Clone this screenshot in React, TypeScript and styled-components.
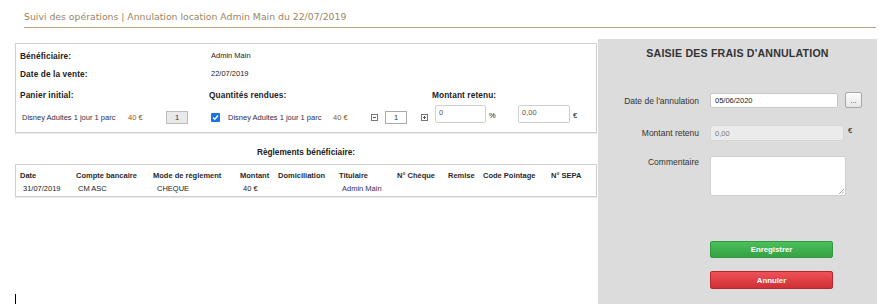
import React from 'react';
import styled, { createGlobalStyle } from 'styled-components';

const GlobalStyle = createGlobalStyle`
  html, body {
    margin: 0;
    padding: 0;
    background: #fff;
  }
  body {
    font-family: "Liberation Sans", Arial, sans-serif;
    color: #222;
  }
`;

const Page = styled.div`
  width: 880px;
  height: 305px;
  overflow: hidden;
`;

const Header = styled.div`
  margin: 0 4px 0 24px;
  padding-top: 12px;
  height: 15px;
  border-bottom: 1px solid #b7a386;
  font-family: "DejaVu Sans", Verdana, sans-serif;
  font-size: 9.3px;
  line-height: 10px;
  color: #9c8562;
`;

const Main = styled.div`
  display: flex;
  gap: 1px;
  margin-top: 11px;
  padding-left: 15px;
`;

const LeftColumn = styled.div`
  width: 582px;
  display: flex;
  flex-direction: column;
`;

const Box = styled.div`
  border: 1px solid #d0d0d0;
  box-shadow: 0 1px 1px rgba(0, 0, 0, 0.08);
`;

const InfoBox = styled(Box)`
  margin-top: 4px;
  height: 90px;
  padding-top: 7px;
  box-sizing: border-box;
`;

const InfoRow = styled.div<{ $mt?: number }>`
  display: grid;
  grid-template-columns: 193px 223px 1fr;
  margin-top: ${(p) => p.$mt ?? 0}px;
`;

const Label = styled.div<{ $indent?: number }>`
  padding-left: ${(p) => p.$indent ?? 4}px;
  font-size: 8.3px;
  font-weight: bold;
  line-height: 10px;
  color: #222;
  letter-spacing: 0.1px;
`;

const Value = styled.div`
  padding-left: 2px;
  font-size: 7.5px;
  line-height: 10px;
  color: #222;
`;

const ItemCell = styled.div<{ $pl?: number }>`
  display: flex;
  align-items: center;
  height: 18px;
  padding-left: ${(p) => p.$pl ?? 0}px;
  font-size: 7.5px;
  color: #333;
`;

const ProductName = styled.span<{ $w: number }>`
  width: ${(p) => p.$w}px;
  color: #2f2d4c;
  white-space: nowrap;
`;

const Price = styled.span`
  width: 38px;
  color: #8a5a2b;
  white-space: nowrap;
`;

const QtyInput = styled.div<{ $disabled?: boolean }>`
  width: 22px;
  height: 13px;
  box-sizing: border-box;
  border: 1px solid ${(p) => (p.$disabled ? '#bcbcbc' : '#a9a9a9')};
  background: ${(p) => (p.$disabled ? '#e9e9e9' : '#fff')};
  display: flex;
  align-items: center;
  justify-content: center;
  font-size: 7.5px;
  color: #333;
`;

const Check = styled.span`
  width: 9px;
  height: 9px;
  margin: 0 8px 0 2px;
  background: #1a73e8;
  border-radius: 1px;
  display: flex;
  align-items: center;
  justify-content: center;
`;

const StepIcon = styled.span<{ $mr: number; $ml?: number }>`
  width: 7px;
  height: 7px;
  margin-left: ${(p) => p.$ml ?? 0}px;
  margin-right: ${(p) => p.$mr}px;
  display: flex;
`;

const AmountRow = styled(ItemCell)`
  margin-top: -3px;
  height: 20px;
  padding-left: 3px;
  align-items: flex-start;
`;

const AmountInput = styled.div<{ $w: number }>`
  width: ${(p) => p.$w}px;
  height: 18px;
  box-sizing: border-box;
  border: 1px solid #cfcfcf;
  border-radius: 2px;
  padding: 2px 0 0 3px;
  font-size: 7.5px;
  color: #555;
`;

const Unit = styled.span<{ $w: number }>`
  width: ${(p) => p.$w}px;
  padding-left: 3px;
  padding-top: 6px;
  font-size: 7.5px;
  color: #222;
`;

const SectionTitle = styled.div`
  margin-top: 14px;
  text-align: center;
  font-size: 8.3px;
  font-weight: bold;
  line-height: 10px;
  color: #222;
`;

const TableBox = styled(Box)`
  margin-top: 7px;
  height: 33px;
  padding-top: 4px;
  box-sizing: border-box;
`;

const Table = styled.table`
  border-collapse: collapse;
  table-layout: fixed;
  width: 100%;
  font-size: 7.5px;
`;

const Th = styled.th<{ $w?: number }>`
  width: ${(p) => (p.$w ? `${p.$w - 4}px` : 'auto')};
  text-align: left;
  font-weight: bold;
  padding: 0 0 0 4px;
  height: 13px;
  color: #2a2a2a;
  white-space: nowrap;
`;

const Td = styled.td<{ $color?: string; $pl?: number }>`
  padding: 0 0 0 ${(p) => p.$pl ?? 7}px;
  height: 12px;
  color: ${(p) => p.$color ?? '#222'};
  white-space: nowrap;
`;

const Caret = styled.div`
  margin-top: 97px;
  width: 1px;
  height: 10px;
  background: #000;
`;

const Panel = styled.div`
  width: 279px;
  height: 265px;
  background: #dcdcdc;
  box-sizing: border-box;
  padding-top: 8px;
`;

const PanelTitle = styled.div`
  text-align: center;
  font-size: 10.6px;
  font-weight: bold;
  line-height: 12px;
  color: #333;
  letter-spacing: 0.2px;
  margin-bottom: 34px;
`;

const FormRow = styled.div<{ $mt?: number; $align?: string }>`
  display: flex;
  align-items: ${(p) => p.$align ?? 'center'};
  margin-top: ${(p) => p.$mt ?? 0}px;
`;

const FormLabel = styled.div<{ $pt?: number }>`
  width: 101px;
  margin-right: 11px;
  text-align: right;
  font-size: 8.5px;
  color: #333;
  padding-top: ${(p) => p.$pt ?? 0}px;
`;

const TextField = styled.div<{ $w: number; $readOnly?: boolean }>`
  width: ${(p) => p.$w}px;
  height: ${(p) => (p.$readOnly ? 16 : 15)}px;
  box-sizing: border-box;
  border: 1px solid ${(p) => (p.$readOnly ? '#d6d6d6' : '#c8c8c8')};
  border-radius: 2px;
  background: ${(p) => (p.$readOnly ? '#ebebeb' : '#fff')};
  padding-left: 4px;
  display: flex;
  align-items: center;
  font-size: 7.5px;
  color: ${(p) => (p.$readOnly ? '#777' : '#222')};
`;

const DotsButton = styled.div`
  width: 17px;
  height: 16px;
  margin-left: 7px;
  margin-top: -1px;
  box-sizing: border-box;
  border: 1px solid #a8a8a8;
  border-radius: 2px;
  background: linear-gradient(#fdfdfd, #e6e6e6);
  display: flex;
  align-items: center;
  justify-content: center;
  font-size: 7px;
  line-height: 7px;
  color: #333;
`;

const Euro = styled.span`
  margin-left: 4px;
  margin-top: -6px;
  font-size: 7.5px;
  color: #222;
`;

const TextArea = styled.div`
  width: 136px;
  height: 40px;
  box-sizing: border-box;
  border: 1px solid #cfcfcf;
  border-radius: 2px;
  background: #fff;
  position: relative;
`;

const Grip = styled.svg`
  position: absolute;
  right: 1px;
  bottom: 1px;
`;

const ActionButton = styled.div<{ $variant: 'save' | 'cancel'; $mt: number }>`
  margin-left: 112px;
  margin-top: ${(p) => p.$mt}px;
  width: 123px;
  height: ${(p) => (p.$variant === 'save' ? 17 : 18)}px;
  box-sizing: border-box;
  border-radius: 2px;
  border: 1px solid ${(p) => (p.$variant === 'save' ? '#2f9a3f' : '#b9262b')};
  background: ${(p) =>
    p.$variant === 'save'
      ? 'linear-gradient(#4cbf5a, #34a145)'
      : 'linear-gradient(#ee5258, #cf2f35)'};
  color: #fff;
  font-size: 7.8px;
  font-weight: bold;
  display: flex;
  align-items: center;
  justify-content: center;
`;

const MinusIcon = () => (
  <svg width="7" height="7" viewBox="0 0 7 7">
    <rect x="0.5" y="0.5" width="6" height="6" fill="#fff" stroke="#777" />
    <line x1="2" y1="3.5" x2="5" y2="3.5" stroke="#555" />
  </svg>
);

const PlusIcon = () => (
  <svg width="7" height="7" viewBox="0 0 7 7">
    <rect x="0.5" y="0.5" width="6" height="6" fill="#fff" stroke="#777" />
    <line x1="2" y1="3.5" x2="5" y2="3.5" stroke="#555" />
    <line x1="3.5" y1="2" x2="3.5" y2="5" stroke="#555" />
  </svg>
);

const reglementHeaders: [string, number | undefined][] = [
  ['Date', 56],
  ['Compte bancaire', 77],
  ['Mode de règlement', 87],
  ['Montant', 38],
  ['Domiciliation', 61],
  ['Titulaire', 58],
  ['N° Chèque', 51],
  ['Remise', 35],
  ['Code Pointage', 68],
  ['N° SEPA', undefined],
];

export default function App() {
  return (
    <Page>
      <GlobalStyle />
      <Header>Suivi des opérations | Annulation location Admin Main du 22/07/2019</Header>
      <Main>
        <LeftColumn>
          <InfoBox>
            <InfoRow>
              <Label>Bénéficiaire:</Label>
              <Value>Admin Main</Value>
            </InfoRow>
            <InfoRow $mt={8}>
              <Label>Date de la vente:</Label>
              <Value>22/07/2019</Value>
            </InfoRow>
            <InfoRow $mt={11}>
              <Label>Panier initial:</Label>
              <Label $indent={0}>Quantités rendues:</Label>
              <Label $indent={0}>Montant retenu:</Label>
            </InfoRow>
            <InfoRow $mt={8}>
              <ItemCell $pl={6}>
                <ProductName $w={106}>Disney Adultes 1 jour 1 parc</ProductName>
                <Price>40 €</Price>
                <QtyInput $disabled>1</QtyInput>
              </ItemCell>
              <ItemCell>
                <Check>
                  <svg width="7" height="7" viewBox="0 0 7 7">
                    <path d="M1 3.6 L2.8 5.3 L6 1.5" fill="none" stroke="#fff" strokeWidth="1.4" />
                  </svg>
                </Check>
                <ProductName $w={105}>Disney Adultes 1 jour 1 parc</ProductName>
                <Price>40 €</Price>
                <StepIcon $mr={7}>
                  <MinusIcon />
                </StepIcon>
                <QtyInput>1</QtyInput>
                <StepIcon $ml={14} $mr={0}>
                  <PlusIcon />
                </StepIcon>
              </ItemCell>
              <AmountRow>
                <AmountInput $w={51}>0</AmountInput>
                <Unit $w={29}>%</Unit>
                <AmountInput $w={52}>0,00</AmountInput>
                <Unit $w={10}>€</Unit>
              </AmountRow>
            </InfoRow>
          </InfoBox>

          <SectionTitle>Règlements bénéficiaire:</SectionTitle>
          <TableBox>
            <Table>
              <thead>
                <tr>
                  {reglementHeaders.map(([h, w]) => (
                    <Th key={h} $w={w}>
                      {h}
                    </Th>
                  ))}
                </tr>
              </thead>
              <tbody>
                <tr>
                  <Td>31/07/2019</Td>
                  <Td $pl={6}>CM ASC</Td>
                  <Td $pl={8}>CHEQUE</Td>
                  <Td>40 €</Td>
                  <Td />
                  <Td $color="#3b2a5a">Admin Main</Td>
                  <Td />
                  <Td />
                  <Td />
                  <Td />
                </tr>
              </tbody>
            </Table>
          </TableBox>
          <Caret />
        </LeftColumn>

        <Panel>
          <PanelTitle>SAISIE DES FRAIS D'ANNULATION</PanelTitle>
          <FormRow>
            <FormLabel>Date de l'annulation</FormLabel>
            <TextField $w={128}>05/06/2020</TextField>
            <DotsButton>...</DotsButton>
          </FormRow>
          <FormRow $mt={17}>
            <FormLabel>Montant retenu</FormLabel>
            <TextField $w={134} $readOnly>
              0,00
            </TextField>
            <Euro>€</Euro>
          </FormRow>
          <FormRow $mt={15} $align="flex-start">
            <FormLabel $pt={1}>Commentaire</FormLabel>
            <TextArea>
              <Grip width="6" height="6" viewBox="0 0 6 6">
                <line x1="1" y1="6" x2="6" y2="1" stroke="#999" strokeWidth="0.8" />
                <line x1="3.5" y1="6" x2="6" y2="3.5" stroke="#999" strokeWidth="0.8" />
              </Grip>
            </TextArea>
          </FormRow>
          <ActionButton $variant="save" $mt={45}>
            Enregistrer
          </ActionButton>
          <ActionButton $variant="cancel" $mt={13}>
            Annuler
          </ActionButton>
        </Panel>
      </Main>
    </Page>
  );
}
